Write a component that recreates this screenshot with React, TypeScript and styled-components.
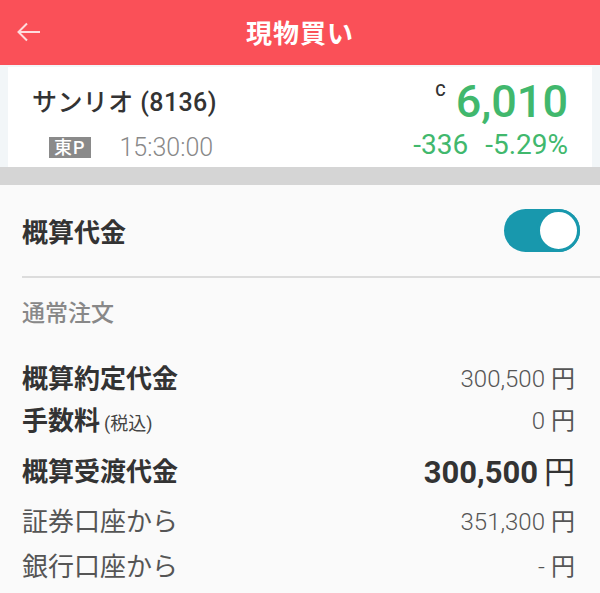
import styled, { createGlobalStyle } from 'styled-components'

const GlobalStyle = createGlobalStyle`
    html, body {
        margin: 0;
        padding: 0;
        background: #fafafa;
    }
    body {
        font-family: Roboto, 'Noto Sans CJK JP', sans-serif;
        color: #333;
    }
`

const Page = styled.div`
    width: 600px;
    min-height: 593px;
    background: #fafafa;
`

const Header = styled.header`
    height: 65px;
    background: #fa5058;
    display: grid;
    grid-template-columns: 70px 1fr 70px;
    align-items: center;
`
const BackButton = styled.div`
    padding-left: 17px;
    display: flex;
    align-items: center;
    padding-bottom: 2px;
`
const Title = styled.h1`
    margin: 0;
    text-align: center;
    color: #fff;
    font-size: 26px;
    font-weight: 700;
    letter-spacing: 1px;
    padding-bottom: 2px;
`

const CardArea = styled.div`
    background: #f2f6f8;
    padding: 2px 8px 0;
`
const Card = styled.div`
    height: 100px;
    background: #fff;
    display: flex;
    justify-content: space-between;
    padding: 0 24px;
    box-sizing: border-box;
`
const CardLeft = styled.div`
    display: flex;
    flex-direction: column;
`
const StockName = styled.div`
    height: 72px;
    line-height: 72px;
    font-size: 25px;
    font-weight: 500;
    letter-spacing: 0.4px;
    color: #333;
`
const MetaRow = styled.div`
    display: flex;
    align-items: center;
    gap: 29px;
    padding-left: 17px;
    margin-top: -6px;
`
const Badge = styled.span`
    background: #8a8a8a;
    color: #fff;
    font-size: 18px;
    font-weight: 500;
    height: 21px;
    line-height: 21px;
    padding: 0 5px;
    letter-spacing: 1px;
`
const Time = styled.span`
    font-size: 25px;
    font-weight: 300;
    color: #888;
`
const CardRight = styled.div`
    display: flex;
    flex-direction: column;
    align-items: flex-end;
`
const PriceRow = styled.div`
    display: flex;
    align-items: flex-start;
    gap: 10px;
    height: 63px;
    padding-top: 10px;
    box-sizing: border-box;
`
const PriceMark = styled.span`
    font-size: 16px;
    font-weight: 500;
    color: #333;
    line-height: 20px;
    padding-top: 4px;
`
const Price = styled.span`
    font-size: 45px;
    font-weight: 500;
    color: #41b86d;
    line-height: 50px;
`
const ChangeRow = styled.div`
    display: flex;
    gap: 17px;
    font-size: 28px;
    color: #41b86d;
    line-height: 30px;
`

const Band = styled.div`
    height: 18px;
    background: #d5d5d5;
`

const ToggleRow = styled.div`
    height: 91px;
    display: flex;
    align-items: center;
    justify-content: space-between;
    padding: 0 20px 0 22px;
`
const ToggleLabel = styled.span`
    font-size: 26px;
    font-weight: 700;
    color: #333;
`
const Track = styled.div<{ $on: boolean }>`
    width: 76px;
    height: 43px;
    border-radius: 22px;
    background: ${p => (p.$on ? '#1898ad' : '#bbb')};
    display: flex;
    justify-content: ${p => (p.$on ? 'flex-end' : 'flex-start')};
`
const Knob = styled.div`
    width: 43px;
    height: 43px;
    box-sizing: border-box;
    border-radius: 50%;
    background: #fff;
    border: 3px solid #1898ad;
`

const Divider = styled.hr`
    margin: 0 0 0 22px;
    border: none;
    height: 2px;
    background: #dcdcdc;
`

const SectionLabel = styled.div`
    height: 77px;
    padding: 24px 22px 0;
    box-sizing: border-box;
    font-size: 23px;
    line-height: 24px;
    font-weight: 500;
    color: #888;
`

const Row = styled.div<{ $h: number }>`
    height: ${p => p.$h}px;
    display: flex;
    align-items: center;
    justify-content: space-between;
    padding: 0 25px 0 22px;
`
const RowLabel = styled.span<{ $bold?: boolean }>`
    font-size: 26px;
    font-weight: ${p => (p.$bold ? 700 : 400)};
    color: ${p => (p.$bold ? '#333' : '#555')};
`
const Note = styled.span`
    font-size: 18px;
    font-weight: 400;
    margin-left: 4px;
    color: #444;
`
const RowValue = styled.span<{ $big?: boolean }>`
    font-size: ${p => (p.$big ? 31 : 24)}px;
    font-weight: ${p => (p.$big ? 700 : 300)};
    color: ${p => (p.$big ? '#333' : '#555')};
`
const Yen = styled.span`
    margin-left: 6px;
    font-weight: 400;
`

interface Line {
    label: string
    note?: string
    value: string
    bold?: boolean
    big?: boolean
    h: number
}

const lines: Line[] = [
    { label: '概算約定代金', value: '300,500', bold: true, h: 42 },
    { label: '手数料', note: '(税込)', value: '0', bold: true, h: 42 },
    { label: '概算受渡代金', value: '300,500', bold: true, big: true, h: 60 },
    { label: '証券口座から', value: '351,300', h: 40 },
    { label: '銀行口座から', value: '-', h: 50 }
]

function App () {
    return (
        <Page>
            <GlobalStyle />
            <Header>
                <BackButton>
                    <svg width='24' height='20' viewBox='0 0 24 20' fill='none'>
                        <path
                            d='M23 10H2M10 1.5L1.5 10L10 18.5'
                            stroke='rgba(255,255,255,0.8)'
                            strokeWidth='2'
                        />
                    </svg>
                </BackButton>
                <Title>現物買い</Title>
                <div />
            </Header>
            <CardArea>
                <Card>
                    <CardLeft>
                        <StockName>サンリオ (8136)</StockName>
                        <MetaRow>
                            <Badge>東P</Badge>
                            <Time>15:30:00</Time>
                        </MetaRow>
                    </CardLeft>
                    <CardRight>
                        <PriceRow>
                            <PriceMark>C</PriceMark>
                            <Price>6,010</Price>
                        </PriceRow>
                        <ChangeRow>
                            <span>-336</span>
                            <span>-5.29%</span>
                        </ChangeRow>
                    </CardRight>
                </Card>
            </CardArea>
            <Band />
            <ToggleRow>
                <ToggleLabel>概算代金</ToggleLabel>
                <Track $on>
                    <Knob />
                </Track>
            </ToggleRow>
            <Divider />
            <SectionLabel>通常注文</SectionLabel>
            {lines.map(line => (
                <Row key={line.label} $h={line.h}>
                    <RowLabel $bold={line.bold}>
                        {line.label}
                        {line.note && <Note>{line.note}</Note>}
                    </RowLabel>
                    <RowValue $big={line.big}>
                        {line.value}
                        <Yen>円</Yen>
                    </RowValue>
                </Row>
            ))}
        </Page>
    )
}

export default App
